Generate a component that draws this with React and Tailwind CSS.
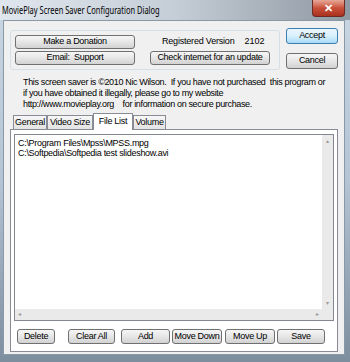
import React from 'react';

const font = { fontFamily: '"Liberation Sans", Arial, sans-serif' };

const WinButton = ({ children, className = '', primary = false }) => (
  <div
    className={`flex items-center justify-center whitespace-nowrap rounded-[3px] border text-[9px] tracking-[-0.3px] text-black ${
      primary
        ? 'border-[#3c7fb1] bg-gradient-to-b from-[#eaf6fd] via-[#d9f0fc] to-[#a7d9f5]'
        : 'border-[#707070] bg-gradient-to-b from-[#f6f6f6] via-[#e6e6e6] to-[#d2d2d2]'
    } ${className}`}
  >
    {children}
  </div>
);

const Tab = ({ label, active, className = '' }) => (
  <div
    className={`flex items-center justify-center whitespace-nowrap border border-b-0 border-[#898c95] text-[9px] tracking-[-0.3px] ${
      active ? 'z-10 -mb-px h-[17px] bg-white' : 'mt-[2px] h-[14px] bg-gradient-to-b from-[#f7f7f7] to-[#e3e3e3]'
    } ${className}`}
  >
    {label}
  </div>
);

export default function App() {
  const files = ['C:\\Program Files\\Mpss\\MPSS.mpg', 'C:\\Softpedia\\Softpedia test slideshow.avi'];

  return (
    <div className="relative h-[362px] w-[350px] overflow-hidden bg-gradient-to-b from-[#c9d6e3] via-[#b4c4d4] to-[#7d8e9f]" style={font}>
      {/* title bar */}
      <div className="flex h-[20px] items-start justify-between bg-gradient-to-r from-[#dfe6ee] via-[#c5cdd6] to-[#8f99a3]">
        <div
          className="origin-left scale-x-[0.68] whitespace-nowrap pl-[3px] pt-[2px] text-[11px] text-black"
          style={{ fontFamily: '"Noto Sans", "Open Sans", sans-serif' }}
        >
          MoviePlay Screen Saver Configuration Dialog
        </div>
        <div className="mr-[5px] flex h-[17px] w-[33px] items-center justify-center rounded-b-[4px] border border-t-0 border-[#6d2a22] bg-gradient-to-b from-[#e6a898] via-[#c8503a] to-[#a8301d] text-[11px] font-bold text-white">
          ✕
        </div>
      </div>

      {/* client */}
      <div className="ml-[3px] mr-[5px] flex h-[335px] flex-col border border-[#8b98a6] bg-[#f0f0f0]">
        <div className="flex items-start pt-[7px]">
          <div className="ml-[6px] mt-[2px] flex h-[40px] w-[270px] flex-col justify-between rounded-[3px] border border-[#d5dfe5] px-[4px] py-[4px]">
            <div className="flex items-center">
              <WinButton className="h-[14px] w-[120px]">Make a Donation</WinButton>
              <div className="ml-[27px] text-[9px] tracking-[-0.2px]">Registered Version</div>
              <div className="ml-[10px] text-[9px]">2102</div>
            </div>
            <div className="flex items-center">
              <WinButton className="h-[14px] w-[120px]">Email:&nbsp;&nbsp;Support</WinButton>
              <WinButton className="ml-[15px] h-[14px] w-[120px]">Check internet for an update</WinButton>
            </div>
          </div>
          <div className="ml-[6px] flex flex-col">
            <WinButton primary className="h-[16px] w-[52px]">Accept</WinButton>
            <WinButton className="mt-[9px] h-[16px] w-[52px]">Cancel</WinButton>
          </div>
        </div>

        <div className="ml-[19px] mt-[7px] text-[9px] leading-[11px] tracking-[-0.35px] text-black">
          <div className="whitespace-pre">This screen saver is ©2010 Nic Wilson.  If you have not purchased  this program or</div>
          <div className="whitespace-pre">if you have obtained it illegally, please go to my website</div>
          <div className="whitespace-pre">http://www.movieplay.org    for information on secure purchase.</div>
        </div>

        {/* tabs */}
        <div className="ml-[9px] mt-[3px] flex items-end">
          <Tab label="General" className="w-[34px]" />
          <Tab label="Video Size" className="w-[46px]" />
          <Tab label="File List" active className="w-[40px]" />
          <Tab label="Volume" className="w-[33px]" />
        </div>
        <div className="ml-[6px] flex h-[223px] w-[328px] flex-col border border-[#898c95] bg-white">
          <div className="ml-[3px] mt-[4px] flex h-[187px] w-[320px] border border-[#828790] bg-white">
            <div className="flex flex-1 flex-col">
              <div className="flex-1 pl-[3px] pt-[3px] text-[9px] leading-[10px] tracking-[-0.3px]">
                {files.map((f) => (
                  <div key={f} className="whitespace-pre">{f}</div>
                ))}
              </div>
              <div className="flex h-[11px] items-center justify-between bg-[#eaeaea] px-[3px] text-[6px] text-[#9a9a9a]">
                <span>◂</span>
                <span>▸</span>
              </div>
            </div>
            <div className="flex w-[11px] flex-col items-center justify-between bg-[#eaeaea] pb-[12px] pt-[2px] text-[6px] text-[#9a9a9a]">
              <span>▴</span>
              <span>▾</span>
            </div>
          </div>
          <div className="ml-[6px] mt-[8px] flex items-center">
            <WinButton className="h-[15px] w-[38px]">Delete</WinButton>
            <WinButton className="ml-[13px] h-[15px] w-[47px]">Clear All</WinButton>
            <WinButton className="ml-[6px] h-[15px] w-[49px]">Add</WinButton>
            <WinButton className="ml-[2px] h-[15px] w-[50px]">Move Down</WinButton>
            <WinButton className="ml-[3px] h-[15px] w-[50px]">Move Up</WinButton>
            <WinButton className="ml-[2px] h-[15px] w-[48px]">Save</WinButton>
          </div>
        </div>
      </div>
    </div>
  );
}
